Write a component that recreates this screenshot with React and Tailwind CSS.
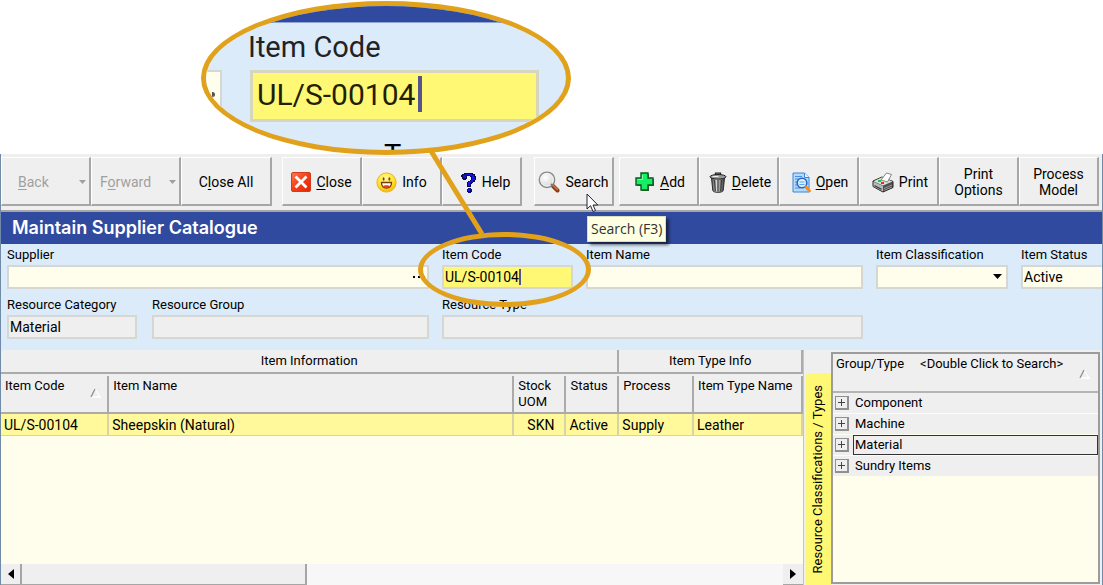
import React from "react";

const CloseIcon = () => (
  <svg width="20" height="20" viewBox="0 0 20 20" aria-hidden="true">
    <defs>
      <linearGradient id="closeFill" x1="0" y1="0" x2="1" y2="1">
        <stop offset="0" stopColor="#ff7a50" />
        <stop offset="0.5" stopColor="#f53c14" />
        <stop offset="1" stopColor="#e02806" />
      </linearGradient>
    </defs>
    <rect x="0.5" y="0.5" width="19" height="19" rx="1.5" fill="url(#closeFill)" stroke="#cf3d1c" />
    <path d="M5.5 5.5L14.5 14.5M14.5 5.5L5.5 14.5" stroke="#fff" strokeWidth="2.8" strokeLinecap="square" />
  </svg>
);

const InfoIcon = () => (
  <svg width="21" height="21" viewBox="0 0 21 21" aria-hidden="true">
    <defs>
      <radialGradient id="faceFill" cx="0.45" cy="0.3" r="0.75">
        <stop offset="0" stopColor="#fff9a0" />
        <stop offset="0.6" stopColor="#ffe21f" />
        <stop offset="1" stopColor="#f5ac08" />
      </radialGradient>
    </defs>
    <circle cx="10.5" cy="10.5" r="9.6" fill="url(#faceFill)" stroke="#f0b41c" />
    <ellipse cx="7.6" cy="7" rx="1" ry="1.8" fill="#7a3c08" />
    <ellipse cx="13.4" cy="7" rx="1" ry="1.8" fill="#7a3c08" />
    <path d="M5.5 10.5h10c0 3.4-2 5.5-5 5.5s-5-2.1-5-5.5z" fill="#fff" stroke="#7a3c08" strokeWidth="1.3" />
    <path d="M7 14c1-1 6-1 7 0-1 1.500-2 2-3.500 2S8 15.500 7 14z" fill="#e0461c" />
  </svg>
);

const HelpIcon = () => (
  <svg width="16" height="21" viewBox="0 0 16 21" aria-hidden="true">
    <path d="M1 2h2V1h9v1h2v2h1v4h-1v2h-2v1h-1v1h-1v3H6v-5h1V9h2V8h1V5H9V4H6v3H5v1H2V7H1V5H0V3h1z" fill="#0a0a50" />
    <path d="M2 3h2V2h7v1h2v2h1v3h-2v2h-2v1H9v3H7v-4h1V9h2V8h1V4H9V3H5v3H2z" fill="#1414e6" />
    <path d="M7 16h3v1h1v3h-1v1H7v-1H6v-3h1z" fill="#0a0a78" />
    <rect x="7" y="17" width="2" height="2" fill="#1c1cf0" />
  </svg>
);

const SearchIcon = () => (
  <svg width="22" height="22" viewBox="0 0 22 22" aria-hidden="true">
    <defs>
      <radialGradient id="lensFill" cx="0.4" cy="0.35" r="0.7">
        <stop offset="0" stopColor="#ffffff" />
        <stop offset="1" stopColor="#d2d2d2" />
      </radialGradient>
    </defs>
    <path d="M14.500 14.500l5 5" stroke="#8a3c14" strokeWidth="4" strokeLinecap="round" />
    <path d="M15 14.200l4.300 4.300" stroke="#d9783c" strokeWidth="1.500" strokeLinecap="round" />
    <circle cx="9" cy="8.800" r="7.700" fill="url(#lensFill)" stroke="#8b8b8b" strokeWidth="1.400" />
    <circle cx="9" cy="8.800" r="6.200" fill="none" stroke="#f6f6f6" strokeWidth="1" />
    <path d="M13 13l2 2" stroke="#777" strokeWidth="2" />
  </svg>
);

const AddIcon = () => (
  <svg width="20" height="20" viewBox="0 0 20 20" aria-hidden="true">
    <path d="M7 2h7v5h5v7h-5v5H7v-5H2V7h5z" fill="#5a5a3c" />
    <path d="M6 1h7v5h5v7h-5v5H6v-5H1V6h5z" fill="#14f064" stroke="#0c5a20" strokeWidth="1.400" />
    <path d="M7.500 3v4.500H3" fill="none" stroke="#7dffab" strokeWidth="1" />
  </svg>
);

const DeleteIcon = () => (
  <svg width="18" height="21" viewBox="0 0 18 21" aria-hidden="true">
    <defs>
      <linearGradient id="binFill" x1="0" x2="1">
        <stop offset="0" stopColor="#4a4a4a" />
        <stop offset="0.4" stopColor="#d8d8d8" />
        <stop offset="1" stopColor="#3a3a3a" />
      </linearGradient>
    </defs>
    <path d="M2.500 6h13l-1.300 12.500c-.2 1.200-2.400 1.800-5.200 1.800s-5-.6-5.200-1.800z" fill="url(#binFill)" stroke="#2c2c2c" />
    <path d="M5.500 8l.8 11M9 8v11.500M12.500 8l-.8 11" stroke="#3c3c3c" strokeWidth="1.200" />
    <ellipse cx="9" cy="4.800" rx="8" ry="2.300" fill="#9a9a9a" stroke="#222" />
    <path d="M6.500 3V1.200h5V3" fill="none" stroke="#222" strokeWidth="1.300" />
    <path d="M3.500 4.500h6" stroke="#eee" />
  </svg>
);

const OpenIcon = () => (
  <svg width="19" height="21" viewBox="0 0 19 21" aria-hidden="true">
    <path d="M1 1h11.500L17 5.500V20H1z" fill="#b5d9fa" stroke="#3c86d2" />
    <path d="M12.500 1v4.500H17" fill="#eaf5ff" stroke="#3c86d2" />
    <path d="M3 4.500h7M3 7h4M3 10h2M3 13h2M3 16h5" stroke="#4a90dc" />
    <circle cx="10" cy="11" r="4.800" fill="#dcf0ff" stroke="#2766c4" strokeWidth="1.600" />
    <path d="M7.500 10h5M7.500 12.500h5" stroke="#65a4e6" />
    <path d="M14 15l3.500 4" stroke="#f09020" strokeWidth="2.800" strokeLinecap="round" />
  </svg>
);

const PrintIcon = () => (
  <svg width="22" height="21" viewBox="0 0 22 21" aria-hidden="true">
    <path d="M1 9l9-4 11 4.500v6L11 20 1 14.500z" fill="#505050" stroke="#222" />
    <path d="M1.500 9.200L10 5.300l10.500 4.300L11 13.500z" fill="#dedede" />
    <path d="M9 8l5.500-7 5 1.500L15.500 10z" fill="#fff" stroke="#777" strokeWidth="0.900" />
    <path d="M1.500 9.800L11 14v5.500l-9.500-5z" fill="#b9b9b9" />
    <path d="M2.500 13l7 3.600v1.400l-7-3.600z" fill="#444" />
    <path d="M12 18.500l8-3.500M12 16.500l8-3.500" stroke="#999" />
    <rect x="6" y="8" width="3" height="2" fill="#18c832" />
    <rect x="9" y="10" width="3" height="2" fill="#e62c1e" />
  </svg>
);

const DropArrow = ({ className }) => (
  <svg width="9" height="5" viewBox="0 0 9 5" aria-hidden="true" className={className}>
    <path d="M0 0h9L4.500 5z" fill="currentColor" />
  </svg>
);

const SortMark = ({ className }) => (
  <svg width="11" height="10" viewBox="0 0 11 10" aria-hidden="true" className={className}>
    <path d="M5 1l5 8H1" fill="none" stroke="#fff" strokeWidth="1.300" />
    <path d="M1 9L5 1" stroke="#8c8c8c" strokeWidth="1.300" />
  </svg>
);

const Pointer = ({ className }) => (
  <svg width="13" height="20" viewBox="0 0 13 20" aria-hidden="true" className={className}>
    <path d="M1 1v15l3.500-3.300L7 18.500l2.500-1L7 12h4.800z" fill="#fff" stroke="#223" strokeWidth="1" />
  </svg>
);

function ToolButton({ icon, children, disabled, drop, className = "" }) {
  return (
    <button
      type="button"
      disabled={disabled}
      className={`flex h-full items-center justify-center border-t border-l border-r-2 border-b-2 border-t-white border-l-white border-r-[#a6a6a6] border-b-[#a6a6a6] bg-[#efefef] pt-[2px] text-center leading-4 text-black disabled:text-[#9f9f9f] ${icon ? "gap-[5px]" : ""} ${className}`}
    >
      {icon}
      <span className={drop ? "flex-1 text-left" : ""}>{children}</span>
      {drop && <DropArrow className="mr-[3px] h-1 w-[7px] text-[#9f9f9f]" />}
    </button>
  );
}

const U = ({ children }) => <span className="underline underline-offset-2">{children}</span>;

function Field({ id, label, children, className = "" }) {
  return (
    <div className={`relative min-w-0 ${className}`}>
      <label htmlFor={id} className="block h-5 text-[13px] leading-5 whitespace-nowrap">
        {label}
      </label>
      {children}
    </div>
  );
}

const box = "block h-6 w-full rounded-none border-2 border-[#d6d6d3] px-px outline-none";
const cream = "bg-[#fffdec]";
const grey = "bg-[#efefef]";

const headCell = "border-b-2 border-[#ababab] p-0 text-[13px] leading-5 font-normal";
const colHead =
  "relative h-10 border-b-2 border-b-[#ababab] p-0 text-left align-top text-[13px] font-normal leading-4";
const cell = "h-[22px] border-r-2 border-b border-[#d8d4a8] p-0 pl-[3px] leading-5";

const columns = [
  { name: "Item Code", sort: true },
  { name: "Item Name" },
  { name: "Stock UOM" },
  { name: "Status" },
  { name: "Process" },
  { name: "Item Type Name" },
];

const groups = ["Component", "Machine", "Material", "Sundry Items"];

export default function App() {
  return (
    <div className="relative flex min-h-screen flex-col overflow-hidden bg-white pt-[154px] font-['Roboto','Liberation_Sans',sans-serif] text-sm text-black">
      <div className="flex flex-1 flex-col border-x border-[#6f8ba8] bg-[#efefef]">
        <header className="flex h-[58px] border-b-2 border-[#a6a6a6] pt-[3px] pb-1">
          <div className="flex">
            <ToolButton disabled drop className="w-[90px] pl-4"><U>B</U>ack</ToolButton>
            <ToolButton disabled drop className="w-[90px] pl-2">F<U>o</U>rward</ToolButton>
            <ToolButton className="w-[91px]">C<U>l</U>ose All</ToolButton>
          </div>
          <div className="ml-[10px] flex">
            <ToolButton icon={<CloseIcon />} className="w-20"><U>C</U>lose</ToolButton>
            <ToolButton icon={<InfoIcon />} className="w-20">Info</ToolButton>
            <ToolButton icon={<HelpIcon />} className="w-20 pl-2">Help</ToolButton>
          </div>
          <div className="relative z-10 ml-3 flex">
            <ToolButton icon={<SearchIcon />} className="w-20">Search</ToolButton>
            <Pointer className="absolute top-9 left-[52px]" />
            <div
              role="tooltip"
              className="absolute top-[59px] left-[53px] border border-[#dcdcc0] bg-[#ffffe1] px-[3px] font-['Open_Sans',sans-serif] text-sm leading-6 whitespace-nowrap text-[#333] shadow-[3px_3px_3px_rgba(0,0,0,0.55)]"
            >
              Search (F3)
            </div>
          </div>
          <div className="ml-[5px] flex">
            <ToolButton icon={<AddIcon />} className="w-20 pl-[3px]"><U>A</U>dd</ToolButton>
            <ToolButton icon={<DeleteIcon />} className="w-20 pl-[3px]"><U>D</U>elete</ToolButton>
            <ToolButton icon={<OpenIcon />} className="w-20 pl-[3px]"><U>O</U>pen</ToolButton>
            <ToolButton icon={<PrintIcon />} className="w-20 pl-[3px]">Print</ToolButton>
            <ToolButton className="w-20 px-3">Print Options</ToolButton>
            <ToolButton className="w-20 px-3">Process Model</ToolButton>
          </div>
        </header>

        <h1 className="h-8 bg-[#304a9f] pl-[11px] font-['Inter',sans-serif] text-lg leading-8 font-semibold text-white">
          Maintain Supplier Catalogue
        </h1>

        <form className="grid grid-cols-[422fr_131fr_277fr_132fr_81fr] gap-x-[13px] gap-y-[6px] bg-[#dbebfa] pt-px pb-[11px] pl-[6px]">
          <Field id="supplier" label="Supplier">
            <input id="supplier" className={`${box} ${cream}`} />
            <button type="button" aria-label="Browse suppliers" className="absolute right-1 bottom-1 flex h-4 items-center gap-[3px]">
              <i className="size-[2px] bg-black" />
              <i className="size-[2px] bg-black" />
              <i className="size-[2px] bg-black" />
            </button>
          </Field>
          <Field id="code" label="Item Code">
            <div className="relative">
              <input id="code" defaultValue="UL/S-00104" className={`${box} bg-[#fff874]`} />
              <i className="absolute top-1 left-[77px] h-4 w-[2px] bg-[#55558c]" />
            </div>
            <div className="pointer-events-none absolute -top-[13px] -left-6 z-10 h-[75px] w-[173px] rounded-[50%] border-5 border-[#e2a11a]" />
          </Field>
          <Field id="name" label="Item Name">
            <input id="name" className={`${box} ${cream}`} />
          </Field>
          <Field id="class" label="Item Classification">
            <select id="class" className={`${box} ${cream} appearance-none`} defaultValue="">
              <option value=""></option>
            </select>
            <DropArrow className="pointer-events-none absolute right-[6px] bottom-[10px]" />
          </Field>
          <Field id="status" label="Item Status">
            <input id="status" defaultValue="Active" className={`${box} ${cream} !border-r-0`} />
          </Field>

          <div className="grid grid-cols-[130fr_277fr] gap-[15px]">
            <Field id="category" label="Resource Category">
              <input id="category" readOnly value="Material" className={`${box} ${grey}`} />
            </Field>
            <Field id="group" label="Resource Group">
              <input id="group" readOnly className={`${box} ${grey}`} />
            </Field>
          </div>
          <Field id="type" label="Resource Type" className="col-span-2">
            <input id="type" readOnly className={`${box} ${grey}`} />
          </Field>
        </form>

        <main className="flex flex-1">
          <section className="flex min-w-0 flex-1 flex-col border-r border-[#c4c4c0] bg-[#fffdec]">
            <table className="w-full table-fixed border-separate border-spacing-0">
              <colgroup>
                <col className="w-[13.5%]" />
                <col />
                <col className="w-[6.5%]" />
                <col className="w-[6.6%]" />
                <col className="w-[9.3%]" />
                <col className="w-[13.6%]" />
              </colgroup>
              <thead className="bg-[#efefef]">
                <tr className="h-6">
                  <th colSpan={4} className={`${headCell} border-r-2`}>Item Information</th>
                  <th colSpan={2} className={`${headCell} border-r-2`}>Item Type Info</th>
                </tr>
                <tr>
                  {columns.map((c) => (
                    <th key={c.name} className={colHead}>
                      <div className="mt-[2px] h-9 border-r-2 border-[#ababab] pt-[2px] pl-1">{c.name}</div>
                      {c.sort && <SortMark className="absolute right-2 bottom-[14px]" />}
                    </th>
                  ))}
                </tr>
              </thead>
              <tbody className="bg-[#fff99b]">
                <tr>
                  <td className={cell}>UL/S-00104</td>
                  <td className={cell}>Sheepskin (Natural)</td>
                  <td className={`${cell} text-center`}>SKN</td>
                  <td className={cell}>Active</td>
                  <td className={cell}>Supply</td>
                  <td className={cell}>Leather</td>
                </tr>
              </tbody>
            </table>
            <div className="flex-1" />
            <div className="flex h-[21px] bg-[#f7f7f7]">
              <button type="button" aria-label="Scroll left" className="flex w-[21px] items-center justify-center border-r-2 border-b border-[#a6a6a6] bg-[#efefef]">
                <svg width="6" height="10" viewBox="0 0 6 10"><path d="M6 0v10L0 5z" /></svg>
              </button>
              <div className="w-[35.500%] border-r-2 border-b border-[#a6a6a6] bg-[#efefef]" />
              <div className="flex-1" />
              <button type="button" aria-label="Scroll right" className="flex w-5 items-center justify-center border-b border-[#a6a6a6] bg-[#efefef]">
                <svg width="6" height="10" viewBox="0 0 6 10"><path d="M0 0v10l6-5z" /></svg>
              </button>
            </div>
          </section>

          <div className="flex w-[27px] flex-col pt-[23px] pl-[2px]">
            <button type="button" className="flex flex-1 items-center justify-center rounded-tl-[3px] bg-[#fff874] text-[13px] whitespace-nowrap">
              <span className="rotate-180 [writing-mode:vertical-rl]">Resource Classifications / Types</span>
            </button>
          </div>

          <aside className="mt-[2px] mr-[2px] mb-px flex w-[269px] flex-col border-2 border-[#9c9c9c] bg-[#fffdec] text-[13px]">
            <div className="relative flex h-[39px] gap-4 border-b-2 border-[#b4b4b4] bg-[#efefef] pl-[3px] leading-5 whitespace-nowrap">
              <span>Group/Type</span>
              <span>&lt;Double Click to Search&gt;</span>
              <SortMark className="absolute right-2 bottom-3" />
            </div>
            <ul>
              {groups.map((g) => (
                <li key={g} className="flex h-[21px] items-center gap-1 border-b border-[#fffdec] bg-[#efefef] pl-[2px]">
                  <button type="button" aria-label={`Expand ${g}`} className="flex size-[14px] items-center justify-center border border-r-2 border-b-2 border-[#909090] bg-[#efefef]">
                    <svg width="7" height="7" viewBox="0 0 7 7"><path d="M0 3.500h7M3.500 0v7" stroke="#444" /></svg>
                  </button>
                  <span className={g === "Material" ? "h-5 flex-1 border border-[#333] pl-px leading-[18px]" : "flex-1 pl-[2px] leading-5"}>
                    {g}
                  </span>
                </li>
              ))}
            </ul>
          </aside>
        </main>
      </div>

      <svg width="60" height="90" viewBox="0 0 60 90" aria-hidden="true" className="pointer-events-none absolute top-[148px] left-[427px]">
        <path d="M4 3L55 86" stroke="#e2a11a" strokeWidth="5" />
      </svg>

      <div className="absolute top-px left-[201px] h-[154px] w-[370px] overflow-hidden rounded-[50%] border-5 border-[#e2a11a] bg-[#dbebfa] text-[29px]">
        <div className="h-[17px] border-b border-[#8fa6d6] bg-[#304a9f]" />
        <label htmlFor="zoomed" className="block h-[47px] pt-[6px] pl-[42px] leading-9 text-[#222]">
          Item Code
        </label>
        <div className="flex gap-7">
          <div className="h-[52px] w-4 border-y-2 border-r-2 border-[#d6d6d3] bg-[#fffdec] pt-[20px] pl-[6px]">
            <div className="h-[5px] w-[3px] rounded-r-full bg-[#555]" />
          </div>
          <div className="relative">
            <input id="zoomed" readOnly value="UL/S-00104" className="block h-[52px] w-[289px] border-3 border-[#d6d6c0] bg-[#fff874] px-1 pb-1 text-[30px] text-[#221f00] outline-none" />
            <i className="absolute top-[6px] left-[168px] h-9 w-1 bg-[#55558c]" />
          </div>
        </div>
        <div className="pt-[15px] pl-[178px] leading-9">T</div>
      </div>
    </div>
  );
}
